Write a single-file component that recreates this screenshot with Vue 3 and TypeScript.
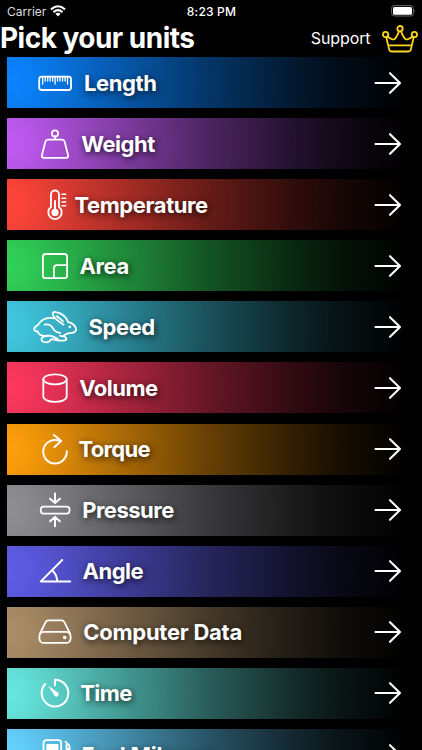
<script setup lang="ts">
interface Unit {
  name: string
  color: string
  gap: number
  tracking: number
  icon: string
}

// Icons are drawn on a 44 x 44 grid.
const units: Unit[] = [
  { name: 'Length', color: '#0a84ff', gap: 7, tracking: -0.4, icon: '<rect x="6.2" y="15.6" width="31.8" height="13.4" rx="2.5"/><path stroke-width="1.3" d="M9.7 16v7M12.2 16v4M14.7 16v4M17.2 16v4M19.7 16v4M22.1 16v7M24.6 16v4M27.1 16v4M29.6 16v4M32.1 16v4M34.5 16v7"/>' },
  { name: 'Weight', color: '#bf5af2', gap: 4.3, tracking: -0.5, icon: '<circle cx="22" cy="11.4" r="3.1"/><path d="M22 14.5v3M15 17.6h14q2 0 2.6 2l3.5 13.6q.6 2.6-2.1 2.6H11q-2.7 0-2.1-2.6l3.5-13.6q.6-2 2.6-2z"/>' },
  { name: 'Temperature', color: '#ff453a', gap: -2.6, tracking: -0.4, icon: '<path d="M18 24V11.5a4 4 0 0 1 8 0V24a6.7 6.7 0 1 1-8 0z"/><path stroke-width="2" d="M22 18v10"/><circle cx="22" cy="29.4" r="3.6" fill="currentColor" stroke="none"/><path stroke-width="1.6" d="M29 11.2h3.6M29 15.2h3.6M29 19h3.6M29 22.8h3.6"/>' },
  { name: 'Area', color: '#30d158', gap: 2.6, tracking: -0.45, icon: '<rect x="9.9" y="10" width="24.2" height="24.2" rx="2.8"/><path d="M34 21.1H24q-3.1 0-3.1 3.1V34"/>' },
  { name: 'Speed', color: '#40c8e0', gap: 11.5, tracking: -0.4, icon: '<path d="M20.5 13.3C19.3 12.9 18.2 12.8 17 12.8C11 12.8 7.2 16 4.7 20.3C2.2 21.5.9 23.5 1.4 25.1C2 26.5 3.2 26.5 4.3 26.1C5.5 28.8 7.6 30.5 10.3 30.9C13 31.2 15.3 30 18.2 30.8C21 31.7 22 33.3 24.5 33.3M30.5 19.6C28 17.8 23.5 15.3 20.8 11.4C18.6 8.4 20.2 6.6 22.7 7.1C28 7.7 33.4 11.7 35.2 17.2C38.6 17.7 42.9 20.4 43.1 24.1C43.1 27.3 39.3 28.2 36.3 28.2C34.2 28.3 32.4 29.4 30 31.2M11.6 19.6C15.3 19 18.5 20.8 19.9 23.4C21 25.6 24 27.5 27.2 28M27 30.8C29.6 31 33.2 31.4 33.4 33.7C33.4 36.1 29.8 35.5 27 35.5C22.7 35.5 20.6 34.2 18.2 34.1C16.8 36.8 13.6 37.8 10.8 37C8.3 36.1 7.7 33.8 9.7 32.1C12 30.8 15 31 18.2 30.8M24 11.2L30 16.4"/><circle cx="36.8" cy="21.9" r="1.3" fill="currentColor" stroke="none"/>' },
  { name: 'Volume', color: '#ff375f', gap: 2.2, tracking: -0.5, icon: '<ellipse cx="22" cy="13.3" rx="11.7" ry="5"/><path d="M10.3 13.3v17.3c0 3 5 5.2 11.7 5.2s11.7-2.2 11.7-5.2V13.3"/>' },
  { name: 'Torque', color: '#ff9f0a', gap: 1.4, tracking: -0.65, icon: '<path stroke-width="2" d="M33.8 24.3A11.8 11.8 0 1 1 22 12.9Q25 12.9 27.8 13.8M20.9 7.9l7.3 6-6.7 6.2"/>' },
  { name: 'Pressure', color: '#8e8e93', gap: 5.2, tracking: -0.5, icon: '<rect x="7.8" y="18.6" width="28.7" height="7" rx="2.8"/><path stroke-width="2" d="M22 5.4v9.5M17.1 10.7l4.9 4.4 4.9-4.4M22 38.2v-9.5M17.1 33.3l4.9-4.4 4.9 4.4"/>' },
  { name: 'Angle', color: '#5e5ce6', gap: 5.6, tracking: -0.5, icon: '<path stroke-width="2" d="M29.2 11 7.9 32.4h29.3M19.3 21.2q4.6 4.5 5 11"/>' },
  { name: 'Computer Data', color: '#ac8e68', gap: 6.2, tracking: -0.25, icon: '<path d="M7 23.5 12.5 12.3q1-1.9 3.1-1.9h12.8q2.1 0 3.1 1.9L37 23.5"/><rect x="6.4" y="21.9" width="31.2" height="11" rx="4.5"/><circle cx="31.7" cy="27.5" r="1.8" fill="currentColor" stroke="none"/>' },
  { name: 'Time', color: '#66e8df', gap: 3.3, tracking: -0.6, icon: '<path stroke-width="2" d="M22 14.2V8.8A13.3 13.3 0 1 1 12.3 13"/><path d="M15.2 14.8 25 21.8a2 2 0 1 1-3.2 3.2z" fill="currentColor" stroke="none"/>' },
  { name: 'Fuel Mileage', color: '#64d2ff', gap: 4.4, tracking: -0.2, icon: '<path d="M10.5 36V10q0-2.8 2.8-2.8h12.1q2.8 0 2.8 2.8v26M8 36.5h23M32.5 8.8l2.8 2.5q1.3 1.2 1.3 3V29q0 3-2.3 3t-2.3-3v-8h-3.5M36 16h-2.5v-4"/><rect x="13.4" y="11" width="12" height="10" rx="1" fill="currentColor" stroke="none"/>' },
]
</script>

<template>
  <main class="screen">
    <div class="status">
      <div class="carrier">
        <span>Carrier</span>
        <svg class="wifi" viewBox="0 0 16 12" fill="none" stroke="currentColor" stroke-width="2.1">
          <path d="M1 4.4Q8-1.9 15 4.4M3.5 7.1q4.5-4 9 0" />
          <path d="M5.4 8.8q2.6-2 5.2 0L8 11.5z" fill="currentColor" stroke="none" />
        </svg>
      </div>
      <span class="clock">8:23 PM</span>
      <div class="power">
        <svg viewBox="0 0 26 12">
          <rect x=".6" y=".6" width="21.8" height="10.4" rx="2.8" fill="none" stroke="#686868" />
          <rect x="2" y="2" width="19" height="7.7" rx="1.5" fill="#fff" />
          <path d="M23.7 4.2q1.5 1.6 0 3.4z" fill="#777" />
        </svg>
      </div>
    </div>

    <header class="header">
      <h1>Pick your units</h1>
      <span class="support">Support</span>
      <svg class="crown" viewBox="0 0 36 28" fill="none" stroke="#fcd51d" stroke-width="1.8" stroke-linejoin="round" stroke-linecap="round">
        <circle cx="18" cy="3.7" r="2.7" />
        <circle cx="3.6" cy="9.5" r="2.7" />
        <circle cx="32.4" cy="9.5" r="2.7" />
        <path d="M4.3 12.2 7.1 24.4q.5 2.1 2.5 2.1h16.8q2 0 2.5-2.1l2.8-12.2M5.6 11.5q4.7 3.7 6.6 2.8T17 6.4M30.4 11.5q-4.7 3.7-6.6 2.8T19 6.4M6.3 20.4h23.4" />
      </svg>
    </header>

    <section class="list">
      <div v-for="unit in units" :key="unit.name" class="row" :style="{ backgroundColor: unit.color }">
        <svg class="icon" viewBox="0 0 44 44" v-html="unit.icon" />
        <span class="label" :style="{ marginLeft: unit.gap + 'px', letterSpacing: unit.tracking + 'px' }">{{ unit.name }}</span>
        <svg class="arrow" viewBox="0 0 28 24"><path d="M1.5 12h24M16 2.2 26 12l-10 9.8" /></svg>
      </div>
    </section>
  </main>
</template>

<style>
body {
  background: #000;
  overflow: hidden;
}
</style>

<style scoped>
.screen {
  width: 422px;
  height: 750px;
  overflow: hidden;
  background: #000;
  color: #fff;
  font-family: Inter, "Liberation Sans", sans-serif;
  display: flex;
  flex-direction: column;
}
.status {
  flex: none;
  height: 22px;
  box-sizing: border-box;
  padding: 0 5px 0 7px;
  display: grid;
  grid-template-columns: 1fr auto 1fr;
  align-items: center;
  font-size: 12px;
}
.carrier {
  display: flex;
  align-items: center;
  gap: 4px;
  color: #ddd;
  letter-spacing: 0;
}
.wifi {
  width: 16px;
  height: 12px;
  color: #fff;
}
.clock {
  font-weight: 500;
  letter-spacing: 0.2px;
  margin-right: 1px;
}
.power {
  display: flex;
  justify-content: flex-end;
}
.power svg {
  width: 26px;
  height: 12px;
}
.header {
  flex: none;
  height: 35px;
  box-sizing: border-box;
  display: flex;
  align-items: center;
  padding: 0 4px 3px 0;
}
h1 {
  margin: 0;
  font-size: 28px;
  line-height: 34px;
  font-weight: 700;
  letter-spacing: -0.52px;
  white-space: nowrap;
}
.support {
  margin-left: auto;
  font-size: 16px;
  letter-spacing: -0.1px;
}
.crown {
  width: 36px;
  height: 28px;
  margin: 1px 0 0 11.5px;
}
.list {
  display: flex;
  flex-direction: column;
  gap: 10.1px;
  padding: 0 14px 0 7.4px;
}
.row {
  flex: none;
  height: 51px;
  box-sizing: border-box;
  padding: 0 6px 0 25.6px;
  display: flex;
  align-items: center;
  background-image: radial-gradient(circle 400px at 0 50%, rgba(0, 0, 0, 0) 0, rgba(0, 0, 0, 0.03) 20px, rgba(0, 0, 0, 0.3) 105px, rgba(0, 0, 0, 0.6) 202px, rgba(0, 0, 0, 0.82) 290px, rgba(0, 0, 0, 0.91) 335px, #000 402px);
}
.icon {
  flex: none;
  width: 44px;
  height: 44px;
  color: #fff;
  fill: none;
  stroke: currentColor;
  stroke-width: 1.8;
  stroke-linecap: round;
  stroke-linejoin: round;
}
.label {
  font-size: 22px;
  line-height: 28px;
  font-weight: 700;
  white-space: nowrap;
  text-shadow: 1px 2px 7px rgba(0, 0, 0, 0.8);
}
.arrow {
  flex: none;
  width: 28px;
  height: 24px;
  margin-left: auto;
  fill: none;
  stroke: #fff;
  stroke-width: 2.1;
  stroke-linecap: round;
  stroke-linejoin: round;
}
</style>
